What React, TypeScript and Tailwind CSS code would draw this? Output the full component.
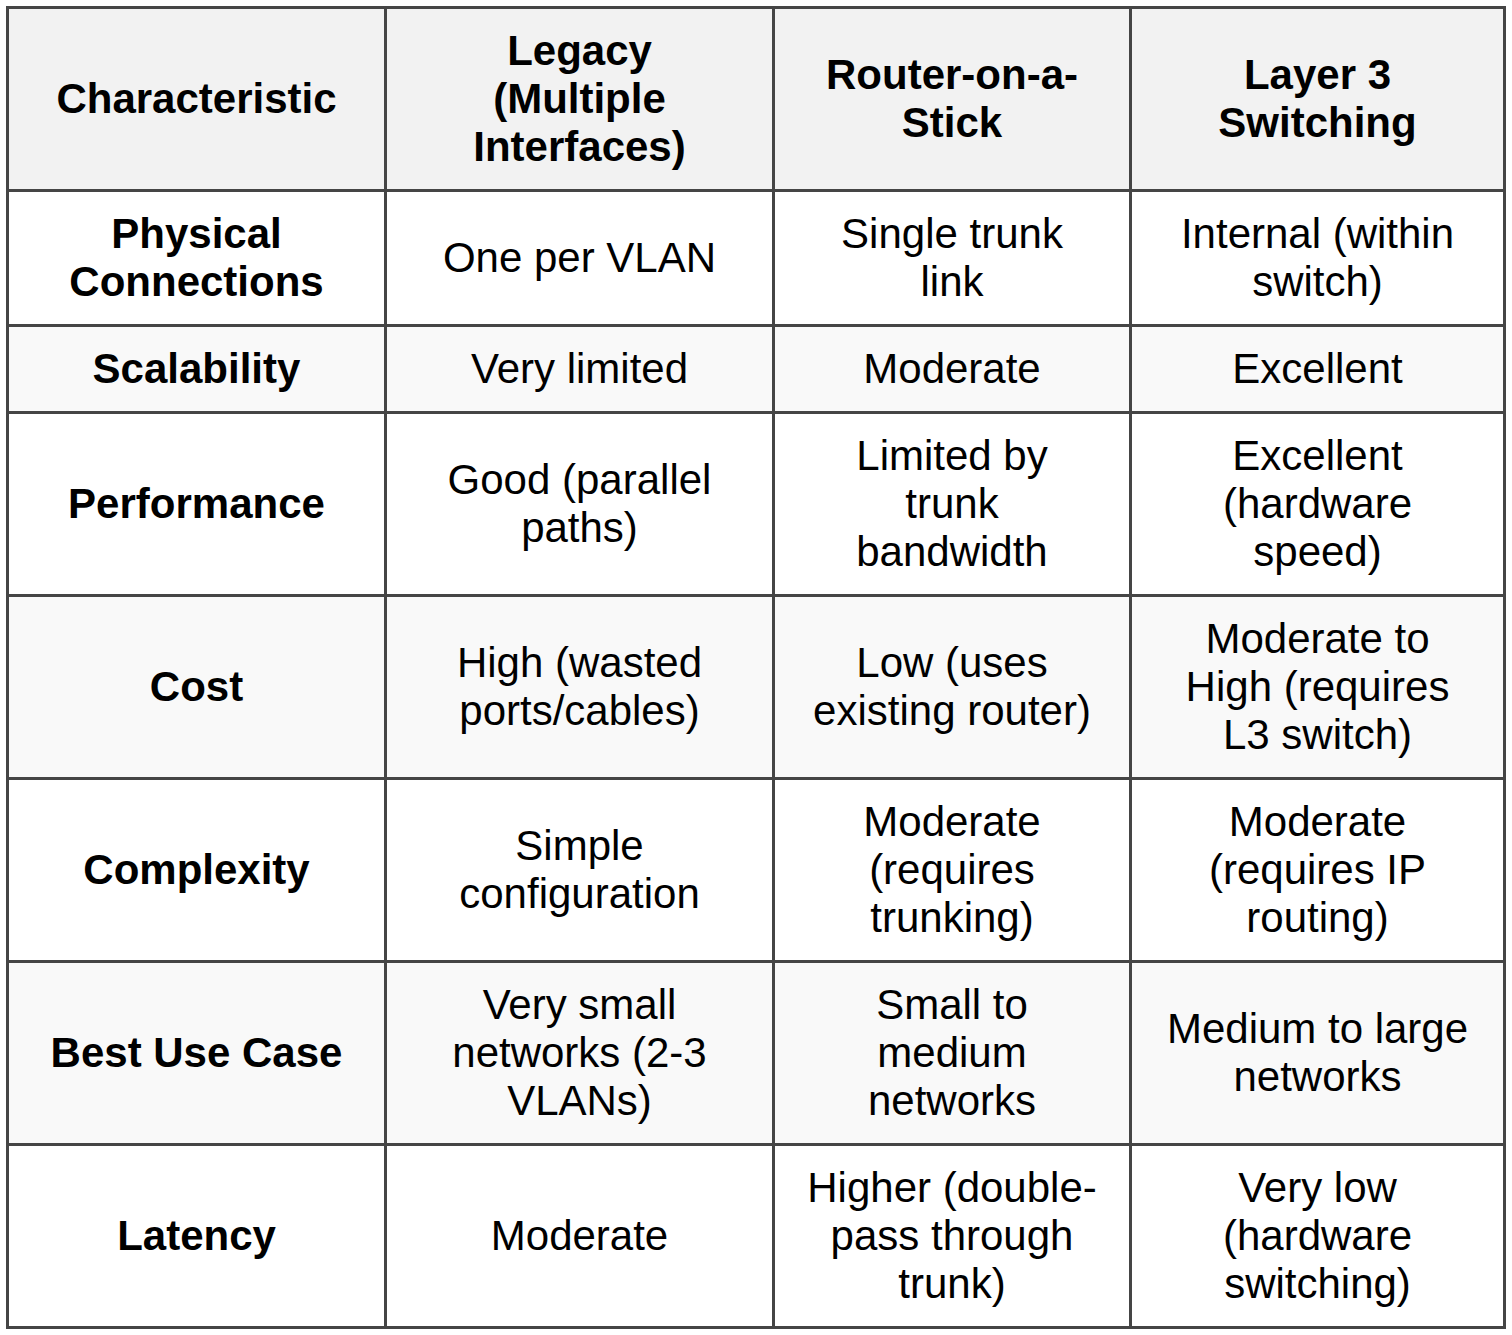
const header = [
  'Characteristic',
  'Legacy (Multiple Interfaces)',
  'Router-on-a-Stick',
  'Layer 3 Switching',
];

const rows: string[][] = [
  ['Physical Connections', 'One per VLAN', 'Single trunk link', 'Internal (within switch)'],
  ['Scalability', 'Very limited', 'Moderate', 'Excellent'],
  ['Performance', 'Good (parallel paths)', 'Limited by trunk bandwidth', 'Excellent (hardware speed)'],
  ['Cost', 'High (wasted ports/cables)', 'Low (uses existing router)', 'Moderate to High (requires L3 switch)'],
  ['Complexity', 'Simple configuration', 'Moderate (requires trunking)', 'Moderate (requires IP routing)'],
  ['Best Use Case', 'Very small networks (2-3 VLANs)', 'Small to medium networks', 'Medium to large networks'],
  ['Latency', 'Moderate', 'Higher (double-pass through trunk)', 'Very low (hardware switching)'],
];

function Cell({ children, bold, bg }: { children: string; bold?: boolean; bg: string }) {
  return (
    <div
      className={`flex items-center justify-center text-center px-[32px] py-[18px] border-r-[3px] border-b-[3px] border-[#454545] ${bg} ${
        bold ? 'font-bold' : 'font-normal'
      }`}
    >
      {children}
    </div>
  );
}

export default function App() {
  return (
    <div className="min-h-screen bg-white p-[6px]">
      <div
        className="grid grid-cols-[378px_388px_357px_374px] w-[1500px] border-l-[3px] border-t-[3px] border-[#454545] text-black text-[42px] leading-[48px]"
        style={{ fontFamily: '"Liberation Sans", Arial, sans-serif' }}
      >
        {header.map((h) => (
          <Cell key={h} bold bg="bg-[#f2f2f2]">
            {h}
          </Cell>
        ))}
        {rows.map((row, i) =>
          row.map((text, j) => (
            <Cell key={`${i}-${j}`} bold={j === 0} bg={i % 2 === 1 ? 'bg-[#f9f9f9]' : 'bg-white'}>
              {text}
            </Cell>
          ))
        )}
      </div>
    </div>
  );
}
